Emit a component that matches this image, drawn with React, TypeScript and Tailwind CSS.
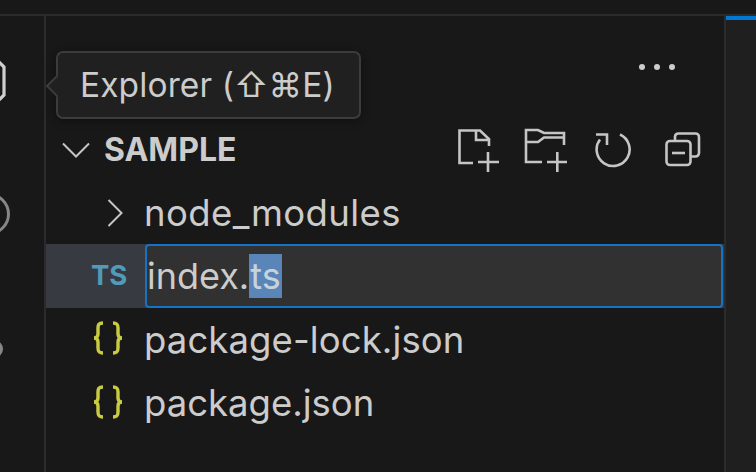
import React from "react";

const stroke = "#c5c5c5";

function Braces() {
  return (
    <svg className="-mt-[4px]" width="34" height="34" viewBox="0 0 34 34" fill="none" stroke="#cbcb41" strokeWidth="3.400">
      <path d="M12 2C7.500 2 7 4 7 7V13C7 15.500 5.500 17 3 17C5.500 17 7 18.500 7 21V27C7 30 7.500 32 12 32" />
      <path d="M22 2C26.500 2 27 4 27 7V13C27 15.500 28.500 17 31 17C28.500 17 27 18.500 27 21V27C27 30 26.500 32 22 32" />
    </svg>
  );
}

function NewFile() {
  return (
    <svg width="42" height="44" viewBox="0 0 42 44" fill="none" stroke={stroke} strokeWidth="2.6">
      <path d="M15 35H1.500V2.500H22L31 11V18M18 2.500V12H31" />
      <path d="M30 24V44M20 34H41" />
    </svg>
  );
}

function NewFolder() {
  return (
    <svg width="44" height="44" viewBox="0 0 44 44" fill="none" stroke={stroke} strokeWidth="2.6">
      <path d="M18 34H2V2H14L20 5H40V17M2 14H14L20 9.500H40" />
      <path d="M33.300 24V44M23 34H43" />
    </svg>
  );
}

function Refresh() {
  return (
    <svg width="37" height="36" viewBox="0 0 37 36" fill="none" stroke={stroke} strokeWidth="2.6">
      <path d="M25 2.500A16.500 16.500 0 1 1 5 7.500" />
      <path d="M1 2.500H12V13" />
    </svg>
  );
}

function Collapse() {
  return (
    <svg width="36" height="36" viewBox="0 0 36 36" fill="none" stroke={stroke} strokeWidth="2.6">
      <rect x="1.500" y="9" width="24" height="24" rx="3.500" />
      <path d="M10 9V4.500A3.500 3.500 0 0 1 13.500 1.500H30.500A3.500 3.500 0 0 1 34 5V21A3.500 3.500 0 0 1 30.500 24.500H25.500" />
      <path d="M7 21H20" />
    </svg>
  );
}

export default function App() {
  return (
    <div className="relative w-[756px] h-[472px] overflow-hidden bg-[#181818] text-[#cccccc] [font-family:Inter,'Noto_Sans',sans-serif] flex flex-col">
      <div className="h-[16px] shrink-0 border-b-2 border-[#2b2b2b]" />
      <div className="flex flex-1 min-h-0">
        <div className="w-[46px] shrink-0 border-r-2 border-[#2b2b2b] overflow-hidden">
          <svg className="mt-[41px] -ml-[24px]" width="30" height="46" viewBox="0 0 30 46" fill="none" stroke="#cfcfcf" strokeWidth="3.200">
            <path d="M2 2H20L28 10V38L22 44H2" />
          </svg>
          <div className="w-[42px] h-[42px] shrink-0 mt-[90px] -ml-[32px] rounded-full border-[3px] border-[#868686]" />
          <div className="w-[18px] h-[18px] shrink-0 mt-[105px] -ml-[15px] rounded-full bg-[#868686]" />
        </div>
        <div className="flex-1 min-w-0 flex flex-col">
          <div className="h-[102px] shrink-0 flex items-start justify-end pt-[48px] pr-[49px] gap-[9px]">
            <span className="w-[6px] h-[6px] rounded-full bg-[#cccccc]" />
            <span className="w-[6px] h-[6px] rounded-full bg-[#cccccc]" />
            <span className="w-[6px] h-[6px] rounded-full bg-[#cccccc]" />
          </div>
          <div className="h-[64px] shrink-0 flex items-center pl-[16px] pr-[23px]">
            <svg width="28" height="16" viewBox="0 0 28 16" fill="none" stroke={stroke} strokeWidth="2">
              <path d="M1 1.500L14 14.500L27 1.500" />
            </svg>
            <span className="ml-[14px] text-[32px] font-bold text-[#cccccc] flex-1 leading-none">SAMPLE</span>
            <div className="flex items-center">
              <NewFile />
              <div className="ml-[24px]"><NewFolder /></div>
              <div className="ml-[27px]"><Refresh /></div>
              <div className="ml-[33px]"><Collapse /></div>
            </div>
          </div>
          <div className="h-[62px] shrink-0 flex items-center pl-[61px] text-[36.500px]">
            <svg width="16" height="28" viewBox="0 0 16 28" fill="none" stroke={stroke} strokeWidth="2">
              <path d="M1.500 1L14.500 14L1.500 27" />
            </svg>
            <span className="ml-[21px] tracking-[0.4px]">node_modules</span>
          </div>
          <div className="h-[64px] shrink-0 flex items-center pl-[45px] bg-[#383a41] text-[36px]">
            <span className="w-[34px] text-center text-[#519aba] text-[27.500px] font-bold">TS</span>
            <div className="ml-[20px] flex-1 h-[64px] mr-[1px] bg-[#313131] border-2 border-[#1473c5] rounded-[4px] flex items-center">
              <span>index.</span>
              <span className="bg-[#5a85b8] h-[44px] leading-[44px] px-px text-[#c8d2dd]">ts</span>
            </div>
          </div>
          <div className="h-[64px] shrink-0 flex items-center pl-[45px] text-[36.500px]">
            <Braces />
            <span className="ml-[19px] tracking-[0.1px]">package-lock.json</span>
          </div>
          <div className="h-[63px] shrink-0 flex items-center pl-[45px] text-[36.500px]">
            <Braces />
            <span className="ml-[19px]">package.json</span>
          </div>
        </div>
        <div className="w-[32px] shrink-0 border-l-2 border-[#2b2b2b] bg-[#1f1f1f]">
          <div className="h-[4px] bg-[#0078d4]" />
        </div>
      </div>
      <div className="absolute left-[56px] top-[51px] w-[305px] h-[68px] rounded-[7px] bg-[#202020] border-2 border-[#3c3c3c] flex items-center pl-[22px] pt-[1px] text-[33.500px] tracking-[0.1px] text-[#cccccc] shadow-[0_2px_8px_rgba(0,0,0,0.36)]">
        <span className="absolute -left-[9px] top-[25px] w-[16px] h-[16px] rotate-45 bg-[#202020] border-l-2 border-b-2 border-[#3c3c3c]" />
        Explorer (⇧⌘E)
      </div>
    </div>
  );
}
